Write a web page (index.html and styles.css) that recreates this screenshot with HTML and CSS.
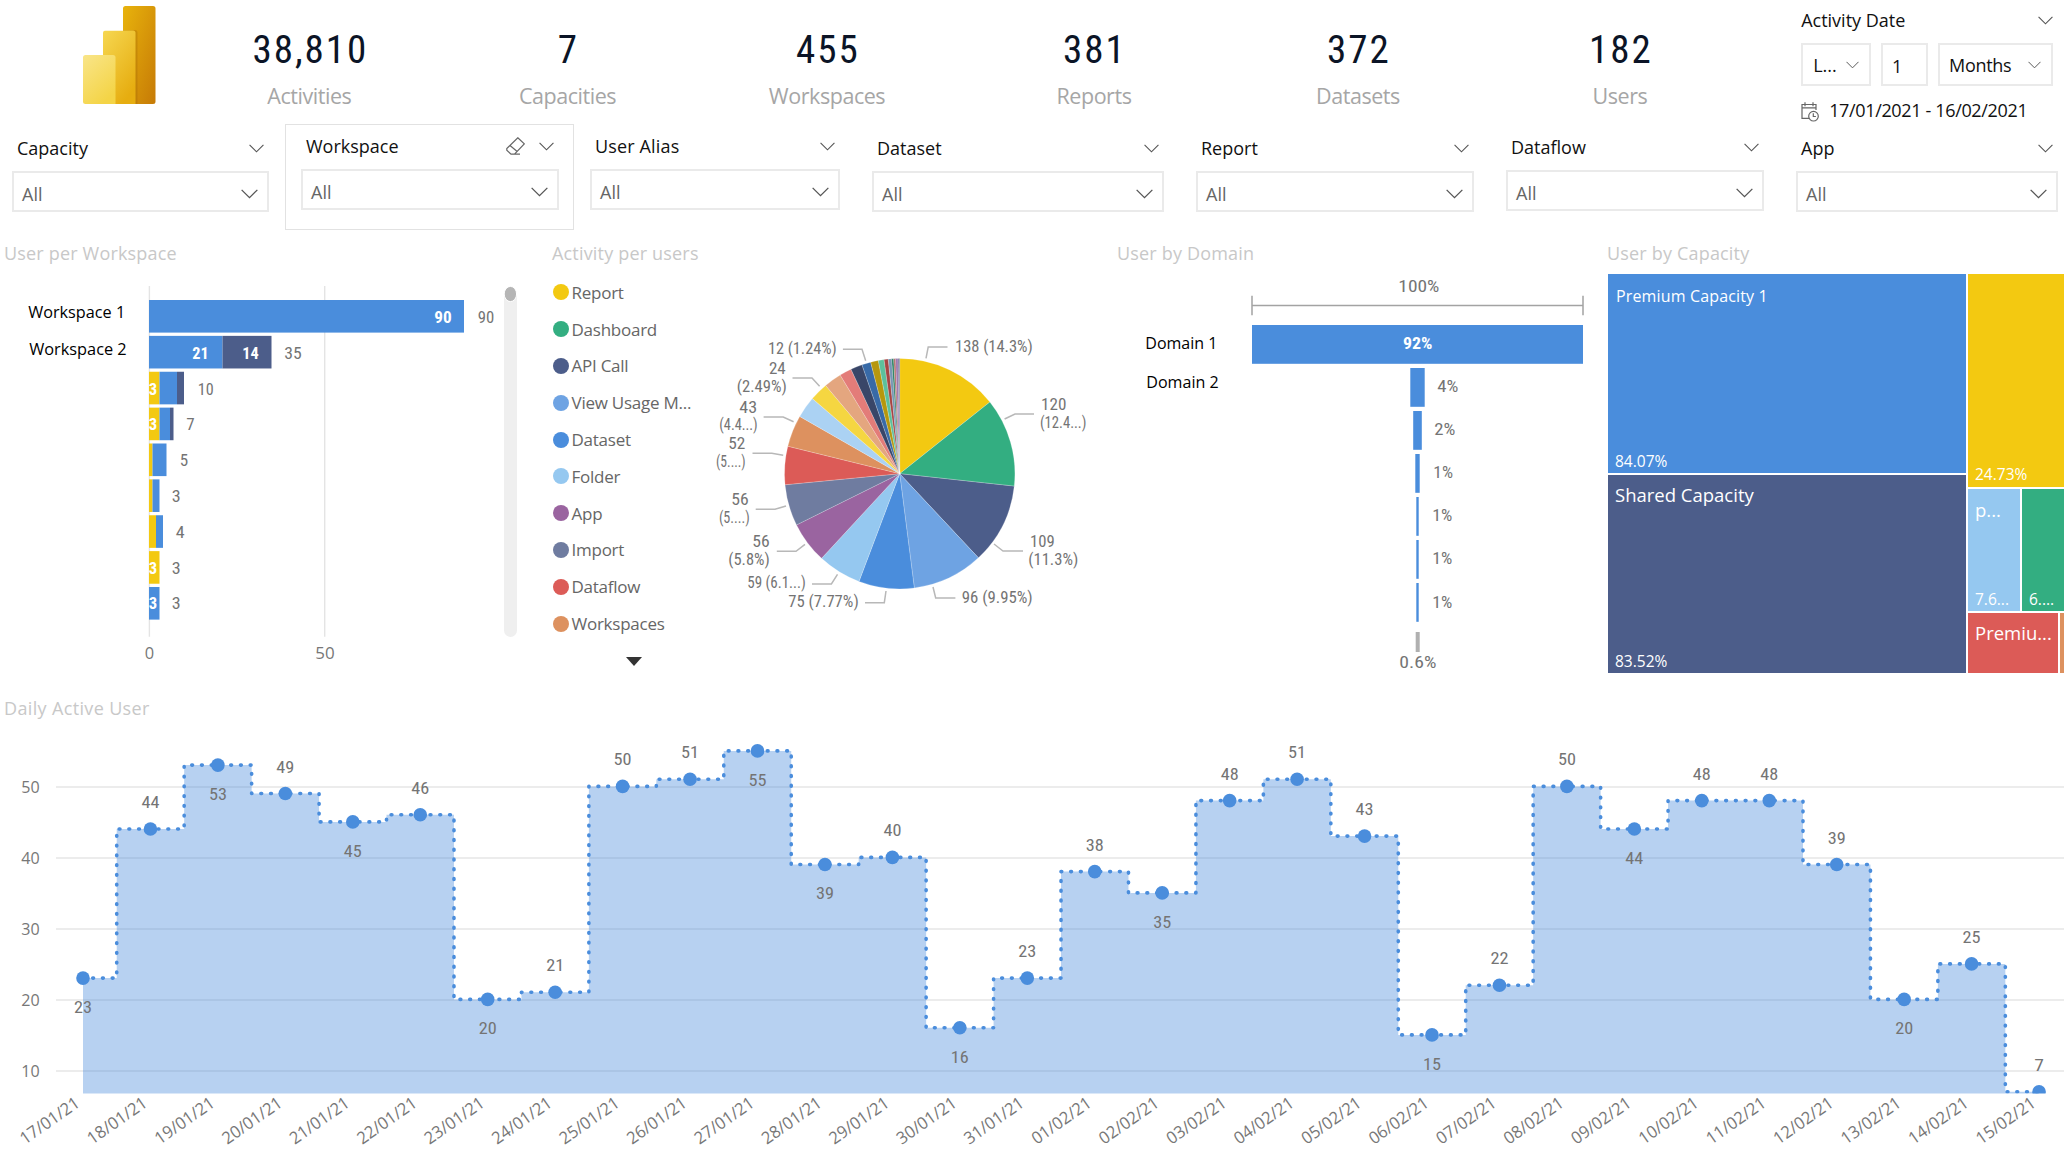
FILE: index.html
```html
<!DOCTYPE html>
<html lang="en">
<head>
<meta charset="utf-8">
<title>Activity overview</title>
<link rel="stylesheet" href="styles.css">
</head>
<body>
<svg class="defs" width="0" height="0" aria-hidden="true">
  <symbol id="chevron" viewBox="0 0 16 9"><path d="M.6 .6 8 8 15.4 .6" fill="none" stroke="currentColor" stroke-width="1.2"/></symbol>
</svg>

<header class="top">
  <div class="logo">
    <svg width="73" height="98" viewBox="0 0 73 98">
      <defs>
        <linearGradient id="g1" x1="0" y1="0" x2="1" y2="1"><stop offset="0" stop-color="#e8b30c"/><stop offset="1" stop-color="#c67a06"/></linearGradient>
        <linearGradient id="g2" x1="0" y1="0" x2=".6" y2="1"><stop offset="0" stop-color="#f6d751"/><stop offset="1" stop-color="#e6ad10"/></linearGradient>
        <linearGradient id="g3" x1="0" y1="0" x2=".6" y2="1"><stop offset="0" stop-color="#f9e589"/><stop offset="1" stop-color="#f4d446"/></linearGradient>
        <clipPath id="frame"><path d="M40 2.5Q40 0 42.5 0H70q2.500 0 2.500 2.500v93q0 2.500-2.500 2.500H2.500Q0 98 0 95.500V51.500Q0 49 2.500 49H20V24.500H40z"/></clipPath>
      </defs>
      <g clip-path="url(#frame)">
        <rect x="40" y="0" width="33" height="98" fill="url(#g1)"/>
        <path d="M40 24h12q2.500 0 2.500 3v71H40z" fill="#9a6508" opacity=".3"/>
        <path d="M20 27q0-2.500 2.500-2.500H50q2.500 0 2.500 2.500v71H20z" fill="url(#g2)"/>
        <path d="M0 49h30q2.500 0 2.500 2.500V98H0z" fill="url(#g3)"/>
      </g>
    </svg>
  </div>
  <div class="kpi"><b>38,810</b><span>Activities</span></div>
  <div class="kpi"><b>7</b><span>Capacities</span></div>
  <div class="kpi"><b>455</b><span>Workspaces</span></div>
  <div class="kpi"><b>381</b><span>Reports</span></div>
  <div class="kpi"><b>372</b><span>Datasets</span></div>
  <div class="kpi"><b>182</b><span>Users</span></div>
  <div class="date">
    <div class="slicer-head"><span>Activity Date</span><svg class="chev"><use href="#chevron"/></svg></div>
    <div class="date-boxes">
      <div class="dbox dbox-last"><span>L...</span><svg class="chev chev-s"><use href="#chevron"/></svg></div>
      <div class="dbox dbox-num"><span>1</span></div>
      <div class="dbox dbox-unit"><span>Months</span><svg class="chev chev-s"><use href="#chevron"/></svg></div>
    </div>
    <div class="date-range">
      <svg width="18" height="20" viewBox="0 0 18 20" fill="none" stroke="#666" stroke-width="1.200"><path d="M8 16.400H1V2.500h14v5.500M1 5.800h14M4 .3v4M12 .3v4"/><circle cx="12.500" cy="14.200" r="4.800"/><path d="M12.300 11.300v3.200h2.600"/></svg>
      <span>17/01/2021 - 16/02/2021</span>
    </div>
  </div>
</header>

<section class="slicers">
  <div class="slicer first"><div class="slicer-head"><span>Capacity</span><svg class="chev"><use href="#chevron"/></svg></div><div class="select"><span>All</span><svg class="chev chev-l"><use href="#chevron"/></svg></div></div>
  <div class="slicer raised active"><div class="slicer-head"><span>Workspace</span>
    <svg class="eraser" width="19" height="18" viewBox="0 0 19 18" fill="none" stroke="#666" stroke-width="1.200"><path d="M11.800 .8 18.300 6.800 8.500 17.200H5L.8 13.200V11.600zM4 8.500l7.200 6M7 17.200h7"/></svg>
    <svg class="chev"><use href="#chevron"/></svg></div><div class="select"><span>All</span><svg class="chev chev-l"><use href="#chevron"/></svg></div></div>
  <div class="slicer raised alias"><div class="slicer-head"><span>User Alias</span><svg class="chev"><use href="#chevron"/></svg></div><div class="select"><span>All</span><svg class="chev chev-l"><use href="#chevron"/></svg></div></div>
  <div class="slicer"><div class="slicer-head"><span>Dataset</span><svg class="chev"><use href="#chevron"/></svg></div><div class="select"><span>All</span><svg class="chev chev-l"><use href="#chevron"/></svg></div></div>
  <div class="slicer"><div class="slicer-head"><span>Report</span><svg class="chev"><use href="#chevron"/></svg></div><div class="select"><span>All</span><svg class="chev chev-l"><use href="#chevron"/></svg></div></div>
  <div class="slicer nudged"><div class="slicer-head"><span>Dataflow</span><svg class="chev"><use href="#chevron"/></svg></div><div class="select"><span>All</span><svg class="chev chev-l"><use href="#chevron"/></svg></div></div>
  <div class="slicer last"><div class="slicer-head"><span>App</span><svg class="chev"><use href="#chevron"/></svg></div><div class="select"><span>All</span><svg class="chev chev-l"><use href="#chevron"/></svg></div></div>
</section>

<main class="charts">
  <section class="panel panel-ws">
    <h2>User per Workspace</h2>
    <svg id="bars" width="540" height="425" viewBox="0 265 540 425"></svg>
  </section>
  <section class="panel panel-act">
    <h2>Activity per users</h2>
    <div class="act-body">
      <div class="legend">
        <ul id="legend"></ul>
        <svg class="more" width="16" height="9" viewBox="0 0 16 9"><path d="M0 0H16L8 9z" fill="#333"/></svg>
      </div>
      <svg id="pie" width="396" height="425" viewBox="704 265 396 425"></svg>
    </div>
  </section>
  <section class="panel panel-dom">
    <h2>User by Domain</h2>
    <svg id="funnel" width="490" height="425" viewBox="1100 265 490 425"></svg>
  </section>
  <section class="panel panel-cap">
    <h2>User by Capacity</h2>
    <div class="treemap">
      <div class="tm-col tm-main">
        <div class="tile blue"><span class="small-name">Premium Capacity 1</span><em>84.07%</em></div>
        <div class="tile indigo"><span>Shared Capacity</span><em>83.52%</em></div>
      </div>
      <div class="tm-col tm-side">
        <div class="tile yellow"><span></span><em>24.73%</em></div>
        <div class="tm-row tm-mid">
          <div class="tile sky"><span>p...</span><em>7.6...</em></div>
          <div class="tile green"><span></span><em>6....</em></div>
        </div>
        <div class="tm-row tm-low">
          <div class="tile red"><span>Premiu...</span></div>
          <div class="tile orange"></div>
        </div>
      </div>
    </div>
  </section>
</main>

<section class="panel panel-daily">
  <h2>Daily Active User</h2>
  <svg id="daily" width="2064" height="436" viewBox="0 720 2064 436"></svg>
</section>
<script src="charts.js"></script>
</body>
</html>
```
FILE: styles.css
```css
* { box-sizing: border-box; }
body {
  margin: 0;
  width: 2064px;
  height: 1156px;
  overflow: hidden;
  background: #fff;
  font-family: "Open Sans", "Noto Sans", sans-serif;
  font-stretch: 93%;
  font-size: 18px;
  color: #111;
}
.defs { display: block; height: 0; }
svg { flex: none; }

.top {
  display: grid;
  grid-template-columns: 180px 258.8px 257.4px 261.6px 272.4px 255.6px 268.4px 1fr;
  height: 124px;
}
.logo { padding: 6px 0 0 83px; }
.kpi {
  display: flex;
  flex-direction: column;
  align-items: center;
  gap: 7px;
  padding-top: 26px;
}
.kpi b {
  padding-left: 2px;
  font: 430 39px/48px Roboto, sans-serif;
  font-stretch: 82%;
  letter-spacing: 2px;
  color: #0b1426;
}
.kpi span { font-size: 21.500px; line-height: 30px; letter-spacing: -.45px; color: #a6a6a6; }

.date { padding: 8px 11px 0 47px; }
.date-boxes { display: flex; justify-content: space-between; margin-top: 11px; }
.dbox {
  display: flex;
  align-items: center;
  justify-content: space-between;
  height: 43px;
  border: 2px solid #eaeaea;
}
.dbox-last { width: 70px; padding: 0 10px 0 10px; }
.dbox-num { width: 47px; padding: 3px 0 0 9px; }
.dbox-unit { width: 115px; padding: 0 10px 0 9px; letter-spacing: -.3px; }
.date-range { display: flex; align-items: center; gap: 10px; margin-top: 12px; line-height: 24px; letter-spacing: -.35px; }
.date-range svg { margin-top: 3px; }

.chev { width: 15px; height: 9px; color: #555; }
.chev-l { width: 17px; height: 10px; }
.chev-s { width: 13px; height: 8px; }

.slicers {
  display: grid;
  grid-template-columns: 285px 289px 282px 324px 310px 290px 284px;
  height: 106px;
}
.slicer { padding: 12px 16px 0; }
.slicer.first { padding-left: 12px; }
.slicer.last { padding-right: 6px; }
.slicer.raised { padding-top: 10px; }
.slicer.alias .slicer-head { letter-spacing: .15px; }
.slicer.nudged { padding-top: 11px; }
.slicer.active { padding-top: 9px; border: 1px solid #e2e2e2; padding-left: 15px; padding-right: 14px; }
.slicer-head { display: flex; align-items: center; line-height: 24px; }
.slicer .slicer-head { padding: 0 5px; margin-bottom: 11px; }
.slicer-head .chev { margin-left: auto; }
.slicer-head .eraser { margin-left: auto; }
.slicer-head .eraser + .chev { margin-left: 14px; }
.select {
  display: flex;
  align-items: center;
  justify-content: space-between;
  height: 41px;
  padding: 4px 9px 0 8px;
  border: 2px solid #eaeaea;
  color: #666;
}
.select span { padding-top: 1px; }

.charts {
  display: grid;
  grid-template-columns: 540px 560px 490px 474px;
  height: 460px;
}
.panel h2 { margin: 0; font-size: 18px; font-weight: 400; line-height: 24px; letter-spacing: .18px; color: #c8c8c8; }
.charts .panel { padding-top: 11px; overflow: hidden; }
.panel > svg, .act-body svg { display: block; }
.panel-ws h2, .panel-daily h2 { padding-left: 4px; }
.panel-daily h2 { letter-spacing: .35px; }
.panel-act h2 { padding-left: 12px; }
.panel-dom h2, .panel-cap h2 { padding-left: 17px; }
.panel-daily { padding-top: 6px; }

.act-body { display: flex; }
.legend { width: 164px; padding: 9px 0 0 12.500px; }
.legend ul { list-style: none; margin: 0; padding: 0; }
.legend li { display: flex; align-items: center; gap: 3px; height: 36.800px; color: #666; font-size: 17px; letter-spacing: -.25px; white-space: nowrap; }
.legend i { width: 16px; height: 16px; border-radius: 50%; }
.legend .more { margin: 15px 0 0 73px; }

.treemap { display: flex; gap: 2px; padding: 9px 0 0 18px; height: 408px; }
.tm-col { display: flex; flex-direction: column; gap: 2px; }
.tm-main { width: 358px; flex: none; }
.tm-main .tile { flex: 1; }
.tm-side { flex: 1; }
.tm-row { display: flex; gap: 2px; }
.tm-mid { height: 122px; }
.tm-low { height: 60px; }
.tile {
  display: flex;
  flex-direction: column;
  justify-content: space-between;
  padding: 7px 0 3px 7px;
  color: #fff;
  font-size: 18.500px;
  line-height: 26px;
  white-space: nowrap;
}
.tile em { font-style: normal; font-size: 15.500px; line-height: 18px; }
.small-name { font-size: 16px; padding: 2px 0 0 1px; letter-spacing: .15px; }
.blue { background: #4a8ddc; }
.indigo { background: #4c5d8a; }
.yellow { background: #f3c911; flex: 1; padding-bottom: 4px; }
.sky { background: #95c8f0; width: 52px; padding-top: 8px; }
.green { background: #33ae81; flex: 1; }
.red { background: #dc5b57; width: 90px; padding-top: 7px; }
.orange { background: #dd915f; flex: 1; padding: 0; }

.din { font-family: Roboto, sans-serif; font-stretch: 85%; font-size: 16px; fill: #747474; }
.din-w { fill: #fff; font-weight: 700; }
.seg { font-family: "Open Sans", sans-serif; font-size: 17px; fill: #777; }
.cat { fill: #000; font-size: 16.500px; }
```
FILE: charts.js
```js
const NS = 'http://www.w3.org/2000/svg';

function add(parent, tag, attrs, content) {
  const el = document.createElementNS(NS, tag);
  for (const k in attrs) el.setAttribute(k, attrs[k]);
  if (content !== undefined) el.textContent = content;
  parent.appendChild(el);
  return el;
}

// Text fitted between two x positions on a baseline
function fit(parent, cls, x1, x2, y, content) {
  return add(parent, 'text', { class: cls, x: x1 - .7, y, textLength: x2 - x1 + 1.4, lengthAdjust: 'spacingAndGlyphs' }, content);
}

const C = { y: '#f3c911', b: '#4a8ddc', i: '#4c5d8a' };

// --- User per workspace ---
(function () {
  const s = document.getElementById('bars');
  for (const x of [149.4, 324.7]) add(s, 'line', { x1: x, x2: x, y1: 286, y2: 636.7, stroke: '#e4e4e4', 'stroke-width': 1.4 });
  const rows = [
    [['b', 90]], [['b', 21], ['i', 14]], [['y', 3], ['b', 5], ['i', 2]], [['y', 3], ['b', 3], ['i', 1]],
    [['y', 1], ['b', 4]], [['y', 1], ['b', 2]], [['y', 2], ['b', 2]], [['y', 3]], [['b', 3]]
  ];
  rows.forEach((r, n) => {
    let x = 149;
    const y = 300 + n * 35.875;
    for (const [c, v] of r) {
      add(s, 'rect', { x, y, width: v * 3.5, height: 32.6, fill: C[c] });
      x += v * 3.5;
    }
  });
  [[435, 451, 0, '90'], [193, 208, 1, '21'], [243, 258, 1, '14'], [149.5, 156.5, 2, '3'], [149.5, 156.5, 3, '3'], [149.5, 156.5, 7, '3'], [149.5, 156.5, 8, '3']]
    .forEach(t => fit(s, 'din din-w', t[0], t[1], 323 + t[2] * 35.8, t[3]));
  [[478.4, 493.5, '90'], [285, 301, '35'], [198.5, 213, '10'], [187, 194, '7'], [180.5, 187.5, '5'], [172.5, 180, '3'], [176.5, 184, '4'], [172.5, 180, '3'], [172.5, 180, '3']]
    .forEach((t, n) => fit(s, 'din', t[0], t[1], 323 + n * 35.8, t[2]));
  fit(s, 'seg cat', 28.9, 124.5, 318, 'Workspace 1');
  fit(s, 'seg cat', 29.9, 126, 355, 'Workspace 2');
  fit(s, 'seg', 145.4, 153.4, 658.7, '0');
  fit(s, 'seg', 316, 334, 658.7, '50');
  add(s, 'rect', { x: 504, y: 288, width: 13, height: 349, rx: 6.5, fill: '#efefef' });
  add(s, 'ellipse', { cx: 510.4, cy: 294, rx: 6.2, ry: 7.6, fill: '#b5b5b5', stroke: '#fff', 'stroke-width': 1 });
})();

// --- Activity legend and pie ---
(function () {
  const items = [['#f3c911', 'Report'], ['#33ae81', 'Dashboard'], ['#4c5d8a', 'API Call'], ['#6ea3e3', 'View Usage M...'], ['#4a8ddc', 'Dataset'],
    ['#95c8f0', 'Folder'], ['#9a64a0', 'App'], ['#6f7ca0', 'Import'], ['#dc5b57', 'Dataflow'], ['#dd915f', 'Workspaces']];
  document.getElementById('legend').innerHTML = items.map(i => `<li><i style="background:${i[0]}"></i>${i[1]}</li>`).join('');

  const s = document.getElementById('pie'), cx = 899.7, cy = 473.7, R = 115.2;
  const ends = [51.5, 96.2, 136.9, 172.7, 200.7, 222.7, 243.6, 264.5, 283.8, 299.8, 310.7, 320, 328.9, 335, 340.9, 345.4, 349.3, 352.2, 354.3, 356, 357, 358, 359.2, 360];
  const cols = items.map(i => i[0]).concat(['#abd2f3', '#f5d641', '#e4a67f', '#e37c79', '#394668', '#386aa7', '#b6970d', '#5cc09c', '#a64443', '#7896b4', '#267f60', '#b0706a', '#9b74ae', '#6a6f95']);
  const pt = a => [cx + R * Math.sin(a * Math.PI / 180), cy - R * Math.cos(a * Math.PI / 180)].map(v => v.toFixed(2)).join(' ');
  let a0 = 0;
  ends.forEach((a, n) => {
    add(s, 'path', { d: `M${cx} ${cy}L${pt(a0)}A${R} ${R} 0 0 1 ${pt(a)}z`, fill: cols[n], stroke: '#fff', 'stroke-width': .4, 'stroke-opacity': .5 });
    a0 = a;
  });
  ['926,358.3 928.2,347 947.5,347', '1004.6,419 1015,414 1034,414', '994,544 1003,551 1023,551', '933,587 935.7,598 955.4,598',
    '886,591 884.3,602.7 865,602.7', '837.5,574.3 831.4,584 812,584', '805,544.3 796,551.3 776.8,551.3', '786,506 775,509.3 755.7,509.3',
    '783.2,455.3 771.8,453.3 752.5,453.3', '793.6,421.7 783.2,417 763.6,417', '819.6,386.3 812,378 792.5,378', '865.7,360.7 862,349.3 842.9,349.3']
    .forEach(p => add(s, 'polyline', { points: p, fill: 'none', stroke: '#b8b8b8', 'stroke-width': 1.5 }));
  [[955.7, 1032, 352, '138 (14.3%)'], [1041.8, 1065.7, 410.3, '120'], [1040.7, 1085.7, 428, '(12.4...)'], [1030.7, 1054, 547.3, '109'],
    [1029, 1077.5, 565, '(11.3%)'], [962.5, 1032, 603.3, '96 (9.95%)'], [789, 858, 607, '75 (7.77%)'], [748, 805, 588.3, '59 (6.1...)'],
    [753, 769, 547.3, '56'], [729, 769, 565, '(5.8%)'], [732, 748, 505.3, '56'], [719.6, 749, 523.3, '(5....)'], [729, 744.6, 449.3, '52'],
    [716.8, 745, 467.3, '(5....)'], [740, 756.4, 413, '43'], [720, 757, 430, '(4.4...)'], [769.6, 785, 374, '24'], [737.5, 786, 392, '(2.49%)'],
    [768.6, 836, 354, '12 (1.24%)']].forEach(t => fit(s, 'din', ...t));
})();

// --- Domain funnel ---
(function () {
  const s = document.getElementById('funnel');
  add(s, 'path', { d: 'M1252 295.700V315.300M1583 295.700V315.300M1252 305.400H1583', stroke: '#a3a3a3', 'stroke-width': 1.5, fill: 'none' });
  [331, 14.4, 8.6, 4.4, 2.4, 2.4, 2.4].forEach((w, n) => add(s, 'rect', { x: 1417.5 - w / 2, y: 325 + n * 43, width: w, height: 38.8, fill: C.b }));
  add(s, 'rect', { x: 1415.7, y: 632, width: 4, height: 20, fill: '#b0b0b0' });
  fit(s, 'din', 1399, 1438.7, 292, '100%').style.fontSize = '17px';
  fit(s, 'din', 1400, 1435.7, 667.7, '0.6%').style.fontSize = '17px';
  fit(s, 'din din-w', 1403.7, 1431.7, 349, '92%');
  [[1438, 1457.7, 392, '4%'], [1435, 1454.7, 435, '2%'], [1434, 1452.3, 478, '1%'], [1433, 1451.7, 521, '1%'], [1433, 1451.7, 564, '1%'], [1433, 1451.7, 608, '1%']]
    .forEach(t => fit(s, 'din', ...t));
  fit(s, 'seg cat', 1146, 1216.7, 349, 'Domain 1');
  fit(s, 'seg cat', 1147, 1218, 388, 'Domain 2');
})();

// --- Daily active users ---
(function () {
  const s = document.getElementById('daily');
  const v = [23, 44, 53, 49, 45, 46, 20, 21, 50, 51, 55, 39, 40, 16, 23, 38, 35, 48, 51, 43, 15, 22, 50, 44, 48, 48, 39, 20, 25, 7];
  const below = [0, 2, 4, 6, 10, 11, 13, 16, 20, 23, 27];
  const X = n => 83 + n * 67.45, Y = k => 786.4 + (50 - k) * 7.1, base = 1093.4;
  for (let k = 10; k <= 50; k += 10) {
    add(s, 'line', { x1: 56, x2: 2064, y1: Y(k) + .6, y2: Y(k) + .6, stroke: '#e6e6e6', 'stroke-width': 1.4 });
    fit(s, 'seg', 22, 39, Y(k) + 6.7, String(k));
  }
  let d = `M${X(0)} ${Y(v[0])}`;
  for (let n = 1; n < v.length; n++) d += `H${X(n - .5)}V${Y(v[n])}`;
  d += `H${X(29)}`;
  add(s, 'path', { d: `${d}V${base}H${X(0)}z`, fill: C.b, 'fill-opacity': .4 });
  const clip = add(s, 'clipPath', { id: 'plot' });
  add(clip, 'rect', { x: 0, y: 720, width: 2064, height: base - 720 });
  const g = add(s, 'g', { 'clip-path': 'url(#plot)' });
  add(g, 'path', { d, fill: 'none', stroke: C.b, 'stroke-width': 3.6, 'stroke-linecap': 'round', 'stroke-linejoin': 'round', 'stroke-dasharray': '.8 8.95' });
  v.forEach((k, n) => {
    add(g, 'circle', { cx: X(n), cy: Y(k), r: 6.8, fill: C.b });
    const t = String(k), w = t.length * 8.3, y = Y(k) + (below.includes(n) ? 34.7 : -21);
    fit(s, 'din', X(n) - w / 2, X(n) + w / 2, y, t).style.fontSize = '16.5px';
    const day = new Date(Date.UTC(2021, 0, 17 + n)), p = q => String(q).padStart(2, '0');
    add(s, 'text', { class: 'seg', 'text-anchor': 'end', textLength: 68.5, lengthAdjust: 'spacingAndGlyphs', transform: `translate(${X(n) - 2} 1105.6) rotate(-35)` },
      `${p(day.getUTCDate())}/${p(day.getUTCMonth() + 1)}/21`);
  });
})();
```
